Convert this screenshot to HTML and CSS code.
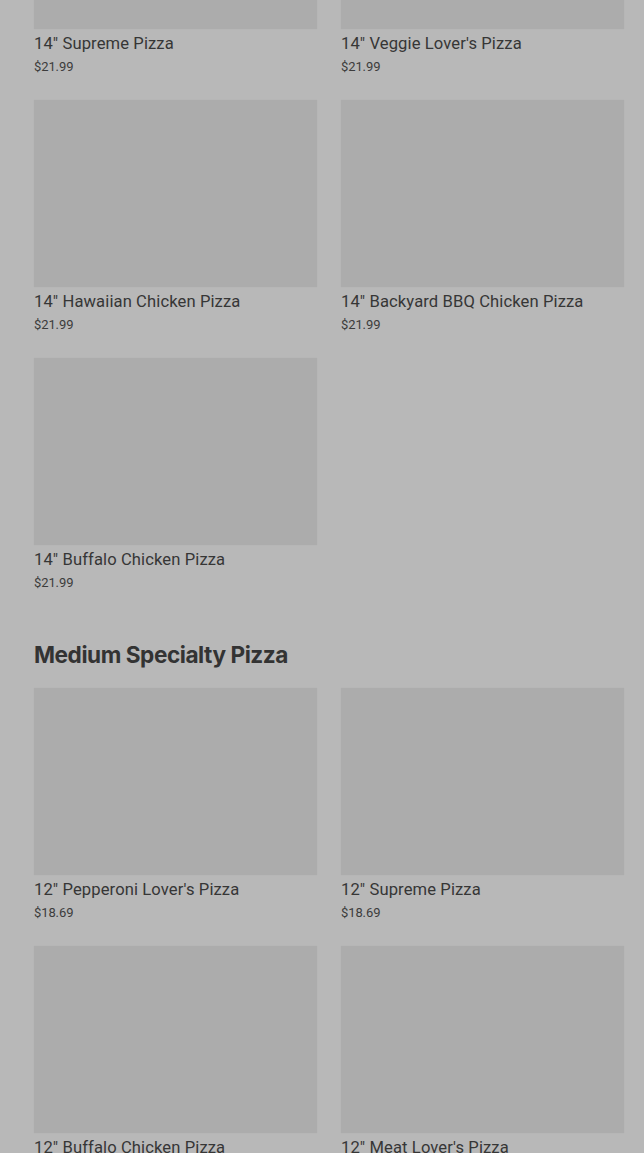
FILE: index.html
```html
<!DOCTYPE html>
<html>
<head>
<meta charset="utf-8">
<link rel="stylesheet" href="styles.css">
</head>
<body>
<main class="page">
  <section class="section first">
    <div class="grid">
      <div class="card"><div class="img"></div><div class="name">14" Supreme Pizza</div><div class="price">$21.99</div></div>
      <div class="card"><div class="img"></div><div class="name">14" Veggie Lover's Pizza</div><div class="price">$21.99</div></div>
      <div class="card"><div class="img"></div><div class="name">14" Hawaiian Chicken Pizza</div><div class="price">$21.99</div></div>
      <div class="card"><div class="img"></div><div class="name">14" Backyard BBQ Chicken Pizza</div><div class="price">$21.99</div></div>
      <div class="card"><div class="img"></div><div class="name">14" Buffalo Chicken Pizza</div><div class="price">$21.99</div></div>
    </div>
  </section>
  <section class="section">
    <h2 class="heading">Medium Specialty Pizza</h2>
    <div class="grid">
      <div class="card"><div class="img"></div><div class="name">12" Pepperoni Lover's Pizza</div><div class="price">$18.69</div></div>
      <div class="card"><div class="img"></div><div class="name">12" Supreme Pizza</div><div class="price">$18.69</div></div>
      <div class="card"><div class="img"></div><div class="name">12" Buffalo Chicken Pizza</div><div class="price">$18.69</div></div>
      <div class="card"><div class="img"></div><div class="name">12" Meat Lover's Pizza</div><div class="price">$18.69</div></div>
    </div>
  </section>
</main>
</body>
</html>
```
FILE: styles.css
```css
html, body {
  margin: 0;
  padding: 0;
  background: #b8b8b8;
  overflow: hidden;
}
.page {
  padding: 0 20px 0 34px;
  margin-top: -158px;
  font-family: Roboto, "Liberation Sans", sans-serif;
  color: #353535;
}
.grid {
  display: grid;
  grid-template-columns: 1fr 1fr;
  column-gap: 24px;
  row-gap: 23px;
}
.card {
  display: flex;
  flex-direction: column;
}
.img {
  height: 187px;
  background: #acacac;
  box-shadow: 0 0 1px rgba(0,0,0,0.06);
}
.name {
  margin-top: 3px;
  font-size: 16.6px;
  line-height: 24px;
  color: #363636;
  letter-spacing: 0.1px;
}
.price {
  margin-top: 1px;
  font-size: 13px;
  line-height: 20px;
  color: #3c3c3c;
  letter-spacing: -0.1px;
}
.heading {
  margin: 46px 0 17px;
  font-family: Inter, "Liberation Sans", sans-serif;
  font-size: 22.6px;
  line-height: 32px;
  font-weight: 700;
  letter-spacing: -0.45px;
  color: #333333;
}
```
